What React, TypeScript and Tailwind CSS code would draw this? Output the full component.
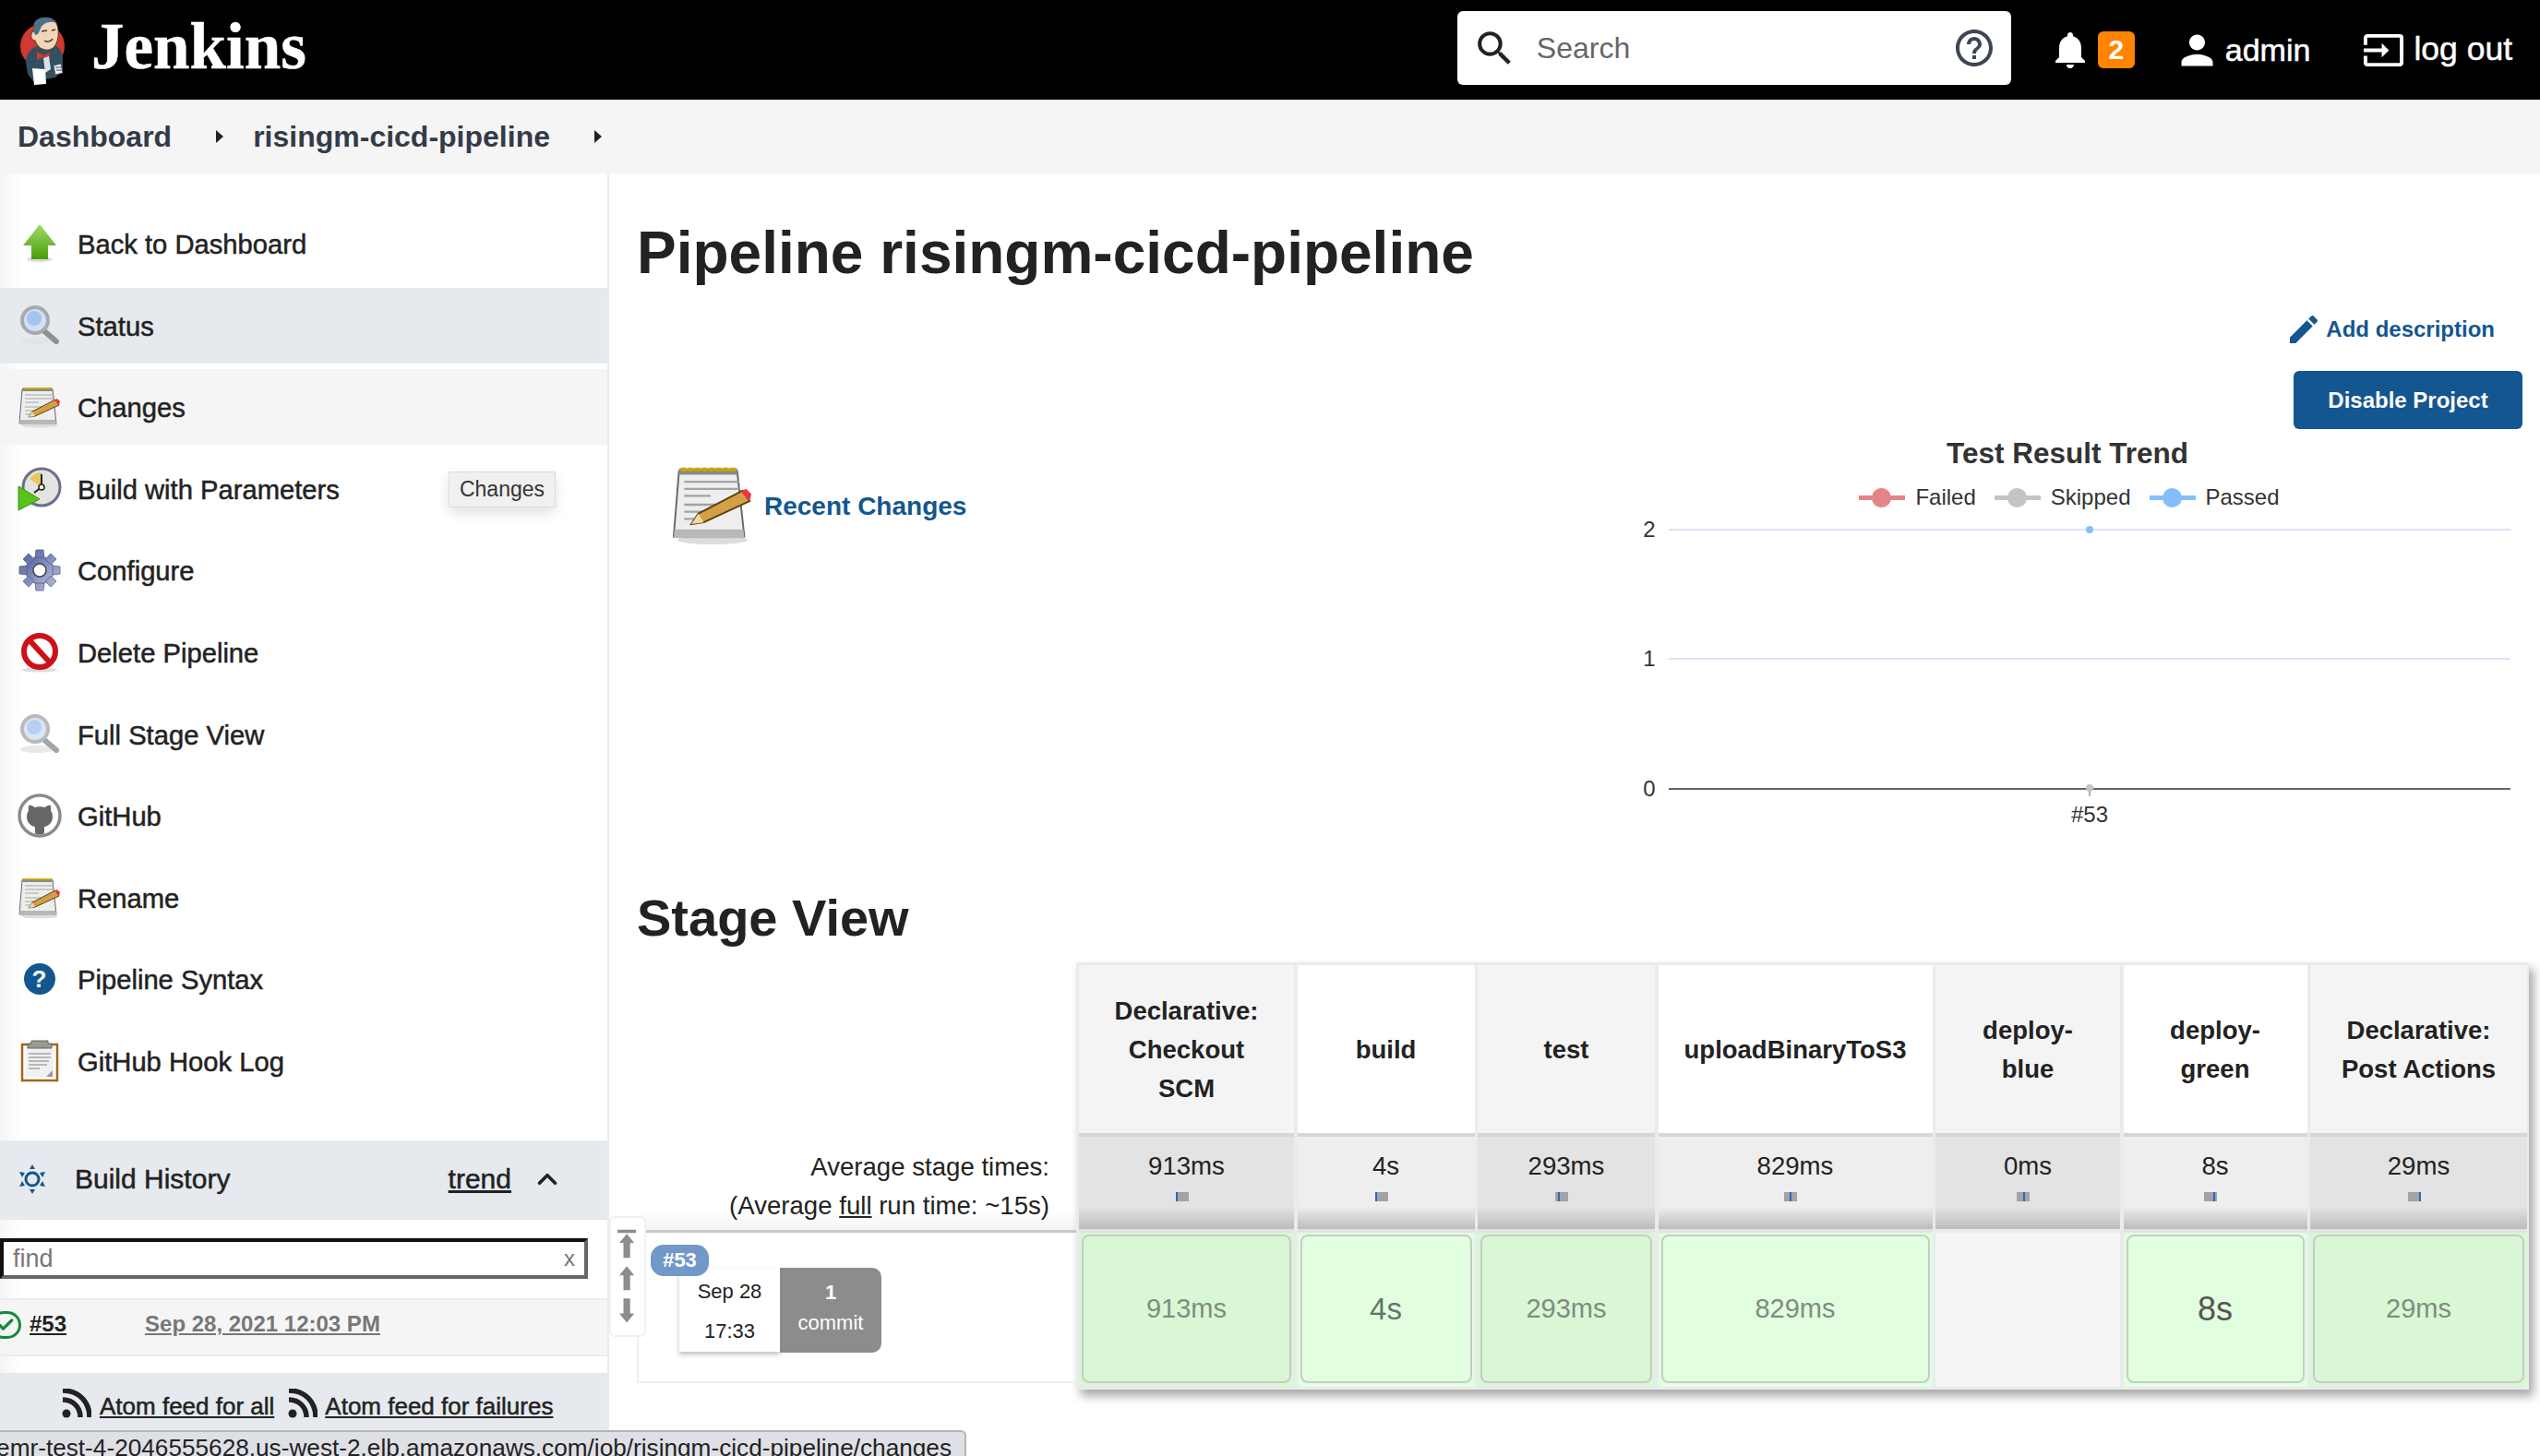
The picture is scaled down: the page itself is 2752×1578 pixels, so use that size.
import { ChevronUp, Check } from "lucide-react";
import { MdSearch, MdNotifications, MdPerson, MdInput, MdHelpOutline, MdEdit } from "react-icons/md";
import type { ReactNode } from "react";

const medium = "[-webkit-text-stroke:0.5px_currentColor]";

function Butler() {
  return (
    <svg viewBox="0 0 54 76" className="w-[54px] h-[76px]">
      <circle cx="26" cy="34" r="24" fill="#d33833" />
      <path d="M8 52c0-12 8-18 16-19l14-1c6 3 10 8 10 16v12l-8 8-24 4-6-8z" fill="#335061" />
      <path d="M17 10c2-8 19-10 24-1 3 6 3 16 0 22-2 5-7 8-12 7-6-1-9-5-11-10-3 0-5-3-4-7 0-2 2-3 3-3z" fill="#f0d6b7" stroke="#49382c" strokeWidth="1" />
      <path d="M17 10c2-8 19-10 24-1-7-3-15 0-17 6l-3 6-3 1c-2-4-2-9-1-12z" fill="#49728b" />
      <path d="M25 18l6-1M36 17l4-1M28 28c3 2 7 1 9-2" stroke="#49382c" strokeWidth="1.4" fill="none" />
      <path d="M20 40l7 4 7-3-1 8-6-3-7 3z" fill="#d33833" />
      <path d="M27 47l6-2 2 14-6 4z" fill="#d9e2e8" />
      <path d="M15 58l14 1 1 16-13 1z" fill="#fff" />
      <path d="M38 55l8-2 2 10-8 2z" fill="#f3f3f3" stroke="#335061" strokeWidth="0.8" />
      <path d="M40 57h6M41 60h6" stroke="#335061" strokeWidth="1" />
    </svg>
  );
}

function ArrowIcon() {
  return (
    <svg viewBox="0 0 40 46" className="w-[40px] h-[46px]">
      <defs>
        <linearGradient id="arrowGreen" x1="0" y1="0" x2="0" y2="1">
          <stop offset="0" stopColor="#a2dc6a" />
          <stop offset="1" stopColor="#4a9c08" />
        </linearGradient>
      </defs>
      <ellipse cx="20" cy="40" rx="14" ry="3" fill="#ddd" />
      <path d="M20 2L38 25H29V40H11V25H2z" fill="url(#arrowGreen)" />
    </svg>
  );
}

function MagnifierIcon({ faded }: { faded?: boolean }) {
  return (
    <svg viewBox="0 0 46 46" className={`w-[46px] h-[46px] ${faded ? "opacity-80" : ""}`}>
      <ellipse cx="20" cy="39" rx="18" ry="4" fill="#e4e4e4" />
      <path d="M27 28l14 12" stroke="#8f8f8f" strokeWidth="6" strokeLinecap="round" />
      <circle cx="18" cy="17" r="14" fill="#cfe0f7" stroke="#a9a9ac" strokeWidth="4" />
      <circle cx="17" cy="15" r="8" fill="#a5c4ef" />
    </svg>
  );
}

function NotepadIcon({ size = "w-[46px] h-[46px]" }: { size?: string }) {
  return (
    <svg viewBox="0 0 46 46" className={size}>
      <ellipse cx="23" cy="43" rx="20" ry="2.5" fill="#ddd" />
      <path d="M4 4h33l4 37H1z" fill="#eeeeee" stroke="#666" strokeWidth="1" />
      <path d="M1.500 37h39l.5 5H1z" fill="#b8b8b8" />
      <path d="M4 2.500h33V6H4z" fill="#8a8a82" />
      <path d="M5.500 3h2M9.500 3h2M13.500 3h2M17.500 3h2M21.500 3h2M25.500 3h2M29.500 3h2M33.500 3h2" stroke="#c9a800" strokeWidth="2" strokeLinecap="round" />
      <path d="M7 10h31M7 14h31M7 18h15M7 23h18M7 27h12M7 31h9" stroke="#a3a3a3" strokeWidth="1.200" />
      <path d="M11 34l4-6 25-13 4 6-26 12z" fill="#d2a045" stroke="#5c3f0c" strokeWidth="1" />
      <path d="M39 15.500l3-1.500 3 3-1 4z" fill="#ef3340" />
      <path d="M11 34l4-6 3 5z" fill="#f0d9a8" />
    </svg>
  );
}

function BuildIcon() {
  return (
    <svg viewBox="0 0 48 48" className="w-[48px] h-[48px]">
      <circle cx="26" cy="22" r="20" fill="#e3e3e0" stroke="#6d6d8d" strokeWidth="3" />
      <path d="M26 22V6a16 16 0 0 0-13 7z" fill="#e7c75c" />
      <path d="M26 8v14l-8 6" fill="none" stroke="#222" strokeWidth="2" />
      <circle cx="26" cy="22" r="3" fill="#fff" stroke="#222" strokeWidth="1.500" />
      <path d="M1 21l23 14L1 47z" fill="#57c21a" stroke="#3f8f10" strokeWidth="1" />
    </svg>
  );
}

function GearIcon() {
  return (
    <svg viewBox="0 0 46 46" className="w-[46px] h-[46px]">
      <defs>
        <linearGradient id="gearFill" x1="0" y1="0" x2="1" y2="1">
          <stop offset="0" stopColor="#4e5f9e" />
          <stop offset="1" stopColor="#b9bedd" />
        </linearGradient>
      </defs>
      <g fill="url(#gearFill)" stroke="#5a6080" strokeWidth="0.8">
        <circle cx="23" cy="23" r="15" />
        <path d="M19 1h8l1 8h-10zM19 45h8l1-8h-10zM1 19v8l8 1v-10zM45 19v8l-8 1v-10zM5 11l6-6 6 6-6 6zM41 11l-6-6-6 6 6 6zM5 35l6 6 6-6-6-6zM41 35l-6 6-6-6 6-6z" />
      </g>
      <circle cx="23" cy="23" r="7" fill="#fff" stroke="#444" strokeWidth="1.500" />
    </svg>
  );
}

function StopIcon() {
  return (
    <svg viewBox="0 0 46 46" className="w-[46px] h-[46px]">
      <ellipse cx="23" cy="42" rx="19" ry="2.500" fill="#ddd" />
      <circle cx="23" cy="22" r="17" fill="#fff" stroke="#cc1219" strokeWidth="6" />
      <path d="M12 10l22 24" stroke="#cc1219" strokeWidth="6" />
    </svg>
  );
}

function GithubIcon() {
  return (
    <svg viewBox="0 0 48 48" className="w-[48px] h-[48px]">
      <circle cx="24" cy="24" r="22" fill="#fff" stroke="#8b8b8b" strokeWidth="3.500" />
      <path d="M24 44c-2 0-5 0-5-2v-6c-3-.5-9-3-9-11 0-3 1-5 2-6.500-.5-2-.3-4 .5-6 2 0 4 1 6 2.500 3-1 8-1 11 0 2-1.500 4-2.500 6-2.500.8 2 1 4 .5 6 1 1.500 2 3.500 2 6.500 0 8-6 10.500-9 11v6c0 2-3 2-5 2z" fill="#666" />
    </svg>
  );
}

function ClipboardIcon() {
  return (
    <svg viewBox="0 0 46 46" className="w-[46px] h-[46px]">
      <path d="M4 5h38v39H4z" fill="#fff" stroke="#a5651a" strokeWidth="2.500" />
      <path d="M8 8h30v32H8z" fill="#f1f1f1" />
      <path d="M14 1h18v3h4v5H10V4h4z" fill="#9a9a8d" stroke="#666" strokeWidth="1" />
      <path d="M11 15h24M11 19h24M11 23h22M11 27h20M11 31h12" stroke="#a5a5a5" strokeWidth="1.500" />
      <path d="M30 40l7-7v7z" fill="#999" />
    </svg>
  );
}

function HelpIcon() {
  return (
    <span className="w-[34px] h-[34px] rounded-full bg-[#14568f] text-white font-bold text-[26px] leading-[34px] text-center">?</span>
  );
}

function Rss() {
  return (
    <svg viewBox="0 0 32 32" className="w-[32px] h-[32px] shrink-0">
      <circle cx="5" cy="27" r="4.500" fill="#222" />
      <path d="M1 12c11 0 19 8 19 19M1 2c17 0 29 12 29 29" fill="none" stroke="#222" strokeWidth="5.500" />
    </svg>
  );
}

const navItems: { label: string; icon: ReactNode; cls?: string }[] = [
  { label: "Back to Dashboard", icon: <ArrowIcon /> },
  { label: "Status", icon: <MagnifierIcon />, cls: "bg-[#e6eaee]" },
  { label: "Changes", icon: <NotepadIcon />, cls: "bg-[#f5f5f5]" },
  { label: "Build with Parameters", icon: <BuildIcon /> },
  { label: "Configure", icon: <GearIcon /> },
  { label: "Delete Pipeline", icon: <StopIcon /> },
  { label: "Full Stage View", icon: <MagnifierIcon faded /> },
  { label: "GitHub", icon: <GithubIcon /> },
  { label: "Rename", icon: <NotepadIcon /> },
  { label: "Pipeline Syntax", icon: <HelpIcon /> },
  { label: "GitHub Hook Log", icon: <ClipboardIcon /> },
];

const stages = [
  { name: ["Declarative:", "Checkout", "SCM"], avg: "913ms", time: "913ms", mark: "left-0", cell: "text-[29px] text-[#7f8c7f]" },
  { name: ["build"], avg: "4s", time: "4s", mark: "left-0", cell: "text-[33px] text-[#66736a]" },
  { name: ["test"], avg: "293ms", time: "293ms", mark: "left-[3px]", cell: "text-[29px] text-[#7f8c7f]" },
  { name: ["uploadBinaryToS3"], avg: "829ms", time: "829ms", mark: "left-[6px]", cell: "text-[29px] text-[#7f8c7f]" },
  { name: ["deploy-", "blue"], avg: "0ms", time: "", mark: "left-[7px]", cell: "" },
  { name: ["deploy-", "green"], avg: "8s", time: "8s", mark: "left-[10px]", cell: "text-[36px] text-[#555]" },
  { name: ["Declarative:", "Post Actions"], avg: "29ms", time: "29ms", mark: "right-0", cell: "text-[29px] text-[#7f8c7f]" },
];

function LegendItem({ color, label }: { color: string; label: string }) {
  return (
    <div className="flex items-center gap-[11px]">
      <span className="relative w-[50px] h-[5px]" style={{ backgroundColor: color }}>
        <span className="absolute left-[14px] -top-[8px] w-[21px] h-[21px] rounded-full" style={{ backgroundColor: color }} />
      </span>
      <span className="text-[24px] text-[#333]">{label}</span>
    </div>
  );
}

export default function App() {
  return (
    <div className="relative h-[1578px] overflow-hidden bg-white text-[#222] [font-family:'Liberation_Sans',Arial,sans-serif]">
      {/* Header */}
      <header className="h-[108px] bg-black flex items-center text-white">
        <div className="ml-[20px] w-[54px]"><Butler /></div>
        <span className={`ml-[25px] mb-[8px] [font-family:'Liberation_Serif',serif] font-bold text-[71px] leading-none ${medium}`}>Jenkins</span>
        <div className="ml-auto flex items-center">
          <div className="w-[600px] h-[80px] bg-white rounded-[6px] flex items-center pl-[16px] pr-[16px] mr-[40px] mb-[4px]">
            <MdSearch className="w-[49px] h-[49px] text-[#222]" />
            <span className="ml-[21px] text-[32px] text-[#666]">Search</span>
            <MdHelpOutline className="ml-auto w-[48px] h-[48px] text-[#3e4654]" />
          </div>
          <MdNotifications className="w-[48px] h-[48px]" />
          <span className="ml-[6px] w-[40px] h-[40px] rounded-[6px] bg-[#ff8500] font-bold text-[30px] leading-[40px] text-center">2</span>
          <MdPerson className="ml-[42px] w-[51px] h-[51px]" />
          <span className={`ml-[5px] text-[34px] ${medium}`}>admin</span>
          <MdInput className="ml-[56px] w-[47px] h-[47px]" />
          <span className={`ml-[9px] mr-[30px] text-[35.5px] ${medium}`}>log out</span>
        </div>
      </header>

      {/* Breadcrumb */}
      <nav className="h-[80px] bg-[#f5f5f5] flex items-center pl-[19px] text-[32px] font-bold text-[#333b49]">
        <span>Dashboard</span>
        <span className="ml-[48px] border-y-[7px] border-l-[8px] border-y-transparent border-l-[#222]" />
        <span className="ml-[32px]">risingm-cicd-pipeline</span>
        <span className="ml-[48px] border-y-[7px] border-l-[8px] border-y-transparent border-l-[#222]" />
      </nav>

      <div className="flex h-[1390px]">
        {/* Sidebar */}
        <aside className="relative w-[660px] shrink-0 border-r-2 border-[#e8edf2] bg-linear-to-r from-[#f5f5f5] to-white to-[24px] pt-[35px]">
          {navItems.map((item) => (
            <div key={item.label} className={`h-[82px] mb-[6.6px] flex items-center ${item.cls ?? ""}`}>
              <div className="w-[84px] flex justify-center pl-[3px] pr-[2px]">{item.icon}</div>
              <span className={`pt-[4px] text-[29.2px] text-[#222] ${medium}`}>{item.label}</span>
            </div>
          ))}
          <div className="absolute left-[486px] top-[323px] w-[116px] h-[39px] bg-[#f0f0f0] border border-[#ddd] shadow-[0_6px_14px_rgba(0,0,0,0.12)] text-[23px] leading-[37px] text-center text-[#333]">
            Changes
          </div>

          <div className="mt-[45px] h-[86px] bg-[#e6eaee] flex items-center pl-[20px] pb-[2px]">
            <svg viewBox="0 0 30 32" className="w-[30px] h-[32px]">
              <circle cx="15" cy="16" r="7" fill="none" stroke="#14568f" strokeWidth="3" />
              <path d="M15 0l3 5h-6zM15 32l-3-5h6zM1 8l6 1-3 5zM29 8l-6 1 3 5zM1 24l6-1-3-5zM29 24l-6-1 3-5z" fill="#14568f" />
            </svg>
            <span className={`ml-[31px] text-[30px] ${medium}`}>Build History</span>
            <span className={`ml-auto text-[30px] underline ${medium}`}>trend</span>
            <ChevronUp className="ml-[22px] mr-[48px] w-[34px] h-[34px]" strokeWidth={2.6} />
          </div>
          <div className="mt-[20px] w-[637px] h-[44px] border-[4px] border-t-[#111] border-l-[#111] border-r-[#666] border-b-[#666] flex items-center pl-[10px] pr-[10px] bg-white">
            <span className="text-[27px] text-[#777]">find</span>
            <span className="ml-auto text-[24px] text-[#777]">x</span>
          </div>
          <div className="mt-[21px] h-[63px] bg-[#f5f5f5] border-y-2 border-[#e8edf2] flex items-center relative pl-[32px] pb-[6px]">
            <span className="absolute -left-[11px] top-[12px] w-[34px] h-[30px] rounded-full border-[3px] border-[#138a36] flex items-center justify-center">
              <Check className="w-[20px] h-[20px] text-[#138a36]" strokeWidth={4} />
            </span>
            <span className="text-[24px] font-bold underline">#53</span>
            <span className="ml-[85px] text-[24px] font-bold underline text-[#777]">Sep 28, 2021 12:03 PM</span>
          </div>
          <div className="mt-[18px] h-[90px] bg-[#e6eaee] flex items-start pt-[17px] pl-[67px]">
            <Rss />
            <span className={`ml-[9px] text-[26px] underline ${medium}`}>Atom feed for all</span>
            <span className="ml-[15px]"><Rss /></span>
            <span className={`ml-[8px] text-[26px] underline ${medium}`}>Atom feed for failures</span>
          </div>
        </aside>

        {/* Main */}
        <main className="flex-1 pt-[46px] pl-[30px]">
          <h1 className="h-[80px] leading-[80px] text-[64px] font-bold text-[#222]">Pipeline risingm-cicd-pipeline</h1>
          <div className="mt-[26px] h-[34px] pr-[49px] flex justify-end items-center text-[#14568f]">
            <MdEdit className="w-[40px] h-[40px]" />
            <span className="ml-[4px] text-[24px] font-bold">Add description</span>
          </div>
          <div className="mt-[28px] pr-[19px] flex justify-end">
            <span className="w-[248px] h-[63px] rounded-[6px] bg-[#14568f] text-white text-[24px] font-bold leading-[63px] text-center">Disable Project</span>
          </div>

          <div className="mt-[5px] h-[430px] flex">
            <div className="pl-[38px] pt-[33px] flex items-start">
              <NotepadIcon size="w-[88px] h-[88px]" />
              <span className="ml-[12px] mt-[25px] text-[28px] font-bold text-[#14568f]">Recent Changes</span>
            </div>
            <div className="ml-auto w-[982px]">
              <div className="text-center text-[31.5px] font-bold text-[#333] leading-[42px] pr-[42px]">Test Result Trend</div>
              <div className="mt-[12px] flex justify-center gap-[20px] pr-[38px] h-[30px] items-center">
                <LegendItem color="#e58487" label="Failed" />
                <LegendItem color="#c4c4c4" label="Skipped" />
                <LegendItem color="#85bffb" label="Passed" />
              </div>
              <svg viewBox="0 0 982 346" className="w-[982px] h-[346px] block">
                <path d="M38 20H950M38 160H950" stroke="#d9e4f3" strokeWidth="2" />
                <path d="M38 301H950" stroke="#666" strokeWidth="2" />
                <path d="M494 301v8" stroke="#666" strokeWidth="1" />
                <circle cx="494" cy="20" r="4" fill="#85bffb" />
                <circle cx="494" cy="300" r="4" fill="#c4c4c4" />
                <g fill="#333" fontSize="24" textAnchor="middle">
                  <text x="17" y="28">2</text>
                  <text x="17" y="168">1</text>
                  <text x="17" y="309">0</text>
                  <text x="494" y="337">#53</text>
                </g>
              </svg>
            </div>
          </div>

          <h2 className="mt-[55px] h-[80px] leading-[80px] text-[56px] font-bold text-[#222]">Stage View</h2>

          <div className="mt-[8px] flex">
            {/* Build rows, left of the table */}
            <div className="w-[476px] shrink-0">
              <div className="h-[293px] border-b-[3px] border-[#c9c9c9] flex flex-col justify-end items-end pr-[29px] pb-[5px] bg-linear-to-t from-[#f4f4f4] to-white to-[22px] text-[27.6px] leading-[42px] text-[#222]">
                <span>Average stage times:</span>
                <span>(Average <span className="underline">full</span> run time: ~15s)</span>
              </div>
              <div className="relative h-[163px] border-l-2 border-b-2 border-[#eceff2] pl-[44px] pt-[38px]">
                <div className="absolute -left-[32px] -top-[18px] w-[40px] h-[131px] bg-white border-2 border-[#eef1f5] rounded-[6px]">
                  <svg viewBox="0 0 40 131" className="w-[36px] h-[127px]">
                    <path d="M8 9h22v4H8zM19 14l9 11h-5v18h-8V25h-5zM19 53l9 11h-5v18h-8V64h-5zM15 92h8v18h5l-9 11-9-11h5z" fill="#8c8c8c" />
                  </svg>
                </div>
                <span className="absolute left-[13px] top-[13px] z-10 w-[63px] h-[34px] rounded-[14px] bg-[#7199c7] text-white text-[22px] font-bold leading-[34px] text-center">#53</span>
                <div className="flex h-[92px]">
                  <div className="w-[109px] mt-px h-[90px] bg-white shadow-[0_3px_5px_rgba(0,0,0,0.25)] flex flex-col items-center justify-between pt-[8px] pb-[6px] text-[22px] text-[#222]">
                    <span>Sep 28</span>
                    <span>17:33</span>
                  </div>
                  <div className="w-[110px] rounded-r-[10px] bg-[#8c8c8c] text-white flex flex-col items-center justify-between pt-[10px] pb-[16px] text-[22px]">
                    <span className="font-bold">1</span>
                    <span>commit</span>
                  </div>
                </div>
              </div>
            </div>

            {/* Stage table */}
            <div className="w-[1574px] h-[463px] p-[3px] bg-[#e9ebee] shadow-[5px_7px_10px_rgba(0,0,0,0.35)] grid grid-cols-[233px_192px_192px_297px_200px_199px_235px] grid-rows-[182px_104px_1fr] gap-x-[3.500px]">
              {stages.map((s, i) => (
                <div key={`head-${i}`} className={`flex flex-col items-center justify-center pt-[2px] text-[27.5px] font-bold leading-[42px] text-[#222] ${i % 2 === 0 ? "bg-[#f4f4f4]" : "bg-white"}`}>
                  {s.name.map((line) => <span key={line}>{line}</span>)}
                </div>
              ))}
              {stages.map((s, i) => (
                <div key={`avg-${i}`} className={`border-t-4 border-[#d6d6d6] flex flex-col items-center pt-[13px] text-[27.6px] leading-[38px] text-[#222] bg-linear-to-t from-[#bcbcbc] to-[24%] ${i % 2 === 0 ? "to-[#e3e3e3]" : "to-[#eeeeee]"}`}>
                  <span>{s.avg}</span>
                  <span className="relative mt-[9px] mr-[10px] w-[14px] h-[10px] bg-[#a3a3a3]">
                    <span className={`absolute top-0 w-[2px] h-[10px] bg-[#2b63c8] ${s.mark}`} />
                  </span>
                </div>
              ))}
              {stages.map((s, i) => {
                const tint = i % 2 === 0 ? "bg-[#d9f7d5]" : "bg-[#e1ffdf]";
                if (!s.time) {
                  return <div key={`cell-${i}`} className="mt-[4px] bg-[#f5f5f5]" />;
                }
                return (
                  <div key={`cell-${i}`} className={`pt-[2px] pb-[4px] px-[3px] ${tint} border-t-4 border-[#e2e2e2]`}>
                    <div className={`h-full rounded-[8px] border-2 border-[#c4cdc6] flex items-center justify-center ${s.cell}`}>{s.time}</div>
                  </div>
                );
              })}
            </div>
          </div>
        </main>
      </div>

      {/* Browser link preview */}
      <div className="absolute left-0 bottom-0 w-[1047px] h-[28px] bg-[#dfe0e6] border-t-2 border-r-2 border-[#b5b5b8] rounded-tr-[6px] overflow-hidden flex justify-end pr-[14px] whitespace-nowrap text-[26.2px] leading-[34px] text-[#222]">
        emr-test-4-2046555628.us-west-2.elb.amazonaws.com/job/risingm-cicd-pipeline/changes
      </div>
    </div>
  );
}
